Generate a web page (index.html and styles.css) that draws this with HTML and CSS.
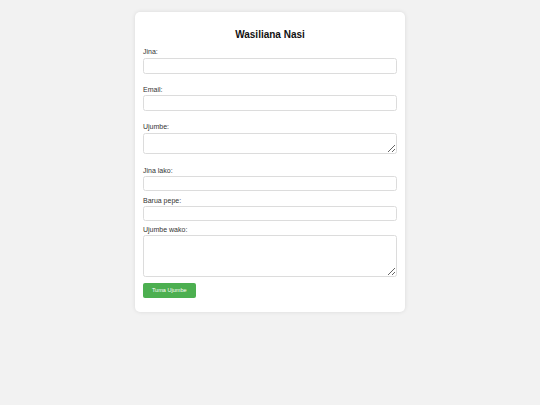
FILE: index.html
```html
<!DOCTYPE html>
<html lang="sw">
<head>
    <meta charset="UTF-8">
    <meta name="viewport" content="width=device-width, initial-scale=1.0">
    <title>Wasiliana Nasi</title>
    <link rel="stylesheet" href="styles.css">
</head>
<body>
    <div class="container">
        <h2 class="title">Wasiliana Nasi</h2>
        <!-- fomu ya kwanza -->
        <form class="form-main">
            <label class="label" for="jina">Jina:</label>
            <input class="field" type="text" id="jina">
            <label class="label" for="email">Email:</label>
            <input class="field" type="email" id="email">
            <label class="label" for="ujumbe">Ujumbe:</label>
            <textarea class="field area-small" id="ujumbe"></textarea>
        </form>
        <!-- fomu ya pili -->
        <form class="form-extra">
            <label class="label" for="jina2">Jina lako:</label>
            <input class="field" type="text" id="jina2">
            <label class="label" for="barua">Barua pepe:</label>
            <input class="field" type="email" id="barua">
            <label class="label" for="ujumbe2">Ujumbe wako:</label>
            <textarea class="field area-big" id="ujumbe2"></textarea>
            <button class="btn" type="submit">Tuma Ujumbe</button>
        </form>
    </div>
</body>
</html>
```

FILE: styles.css
```css
* {
    margin: 0;
    padding: 0;
    box-sizing: border-box;
}

html,
body {
    width: 100%;
    height: 100%;
}

body {
    background: #f2f2f2;
    font-family: "Liberation Sans", Arial, sans-serif;
    color: #333;
    padding-top: 12px;
}

.container {
    width: 270px;
    margin: 0 auto;
    padding: 8.8px 8px 9px;
    background: #fff;
    border-radius: 5px;
    box-shadow: 0 0 4px rgba(0, 0, 0, 0.1);
}

.title {
    margin: 8.3px 0;
    font-size: 10px;
    font-weight: bold;
    color: #111;
    text-align: center;
}

.form-main,
.form-extra {
    display: flex;
    flex-direction: column;
    align-items: flex-start;
}

.label {
    display: block;
    font-size: 7px;
    line-height: 7.7px;
    margin-bottom: 2px;
}

.field {
    display: block;
    width: 100%;
    height: 16px;
    border: 1px solid #dcdcdc;
    border-radius: 2.5px;
    background: #fff;
    font-family: inherit;
    font-size: 6.67px;
}

.form-main .field {
    margin-bottom: 11.7px;
}

.form-main .area-small {
    height: 21px;
    margin-bottom: 13.5px;
}

.form-extra {
    padding-bottom: 5.5px;
}

.form-extra .label {
    margin-bottom: 1.4px;
}

.form-extra .field {
    height: 15px;
    margin-bottom: 5.3px;
}

.form-extra .area-big {
    height: 41.5px;
    margin-bottom: 6px;
}

.btn {
    width: 52.5px;
    height: 15px;
    background: #4caf50;
    color: #fff;
    border: none;
    border-radius: 2px;
    font-family: inherit;
    font-size: 5.56px;
    cursor: pointer;
}
```
